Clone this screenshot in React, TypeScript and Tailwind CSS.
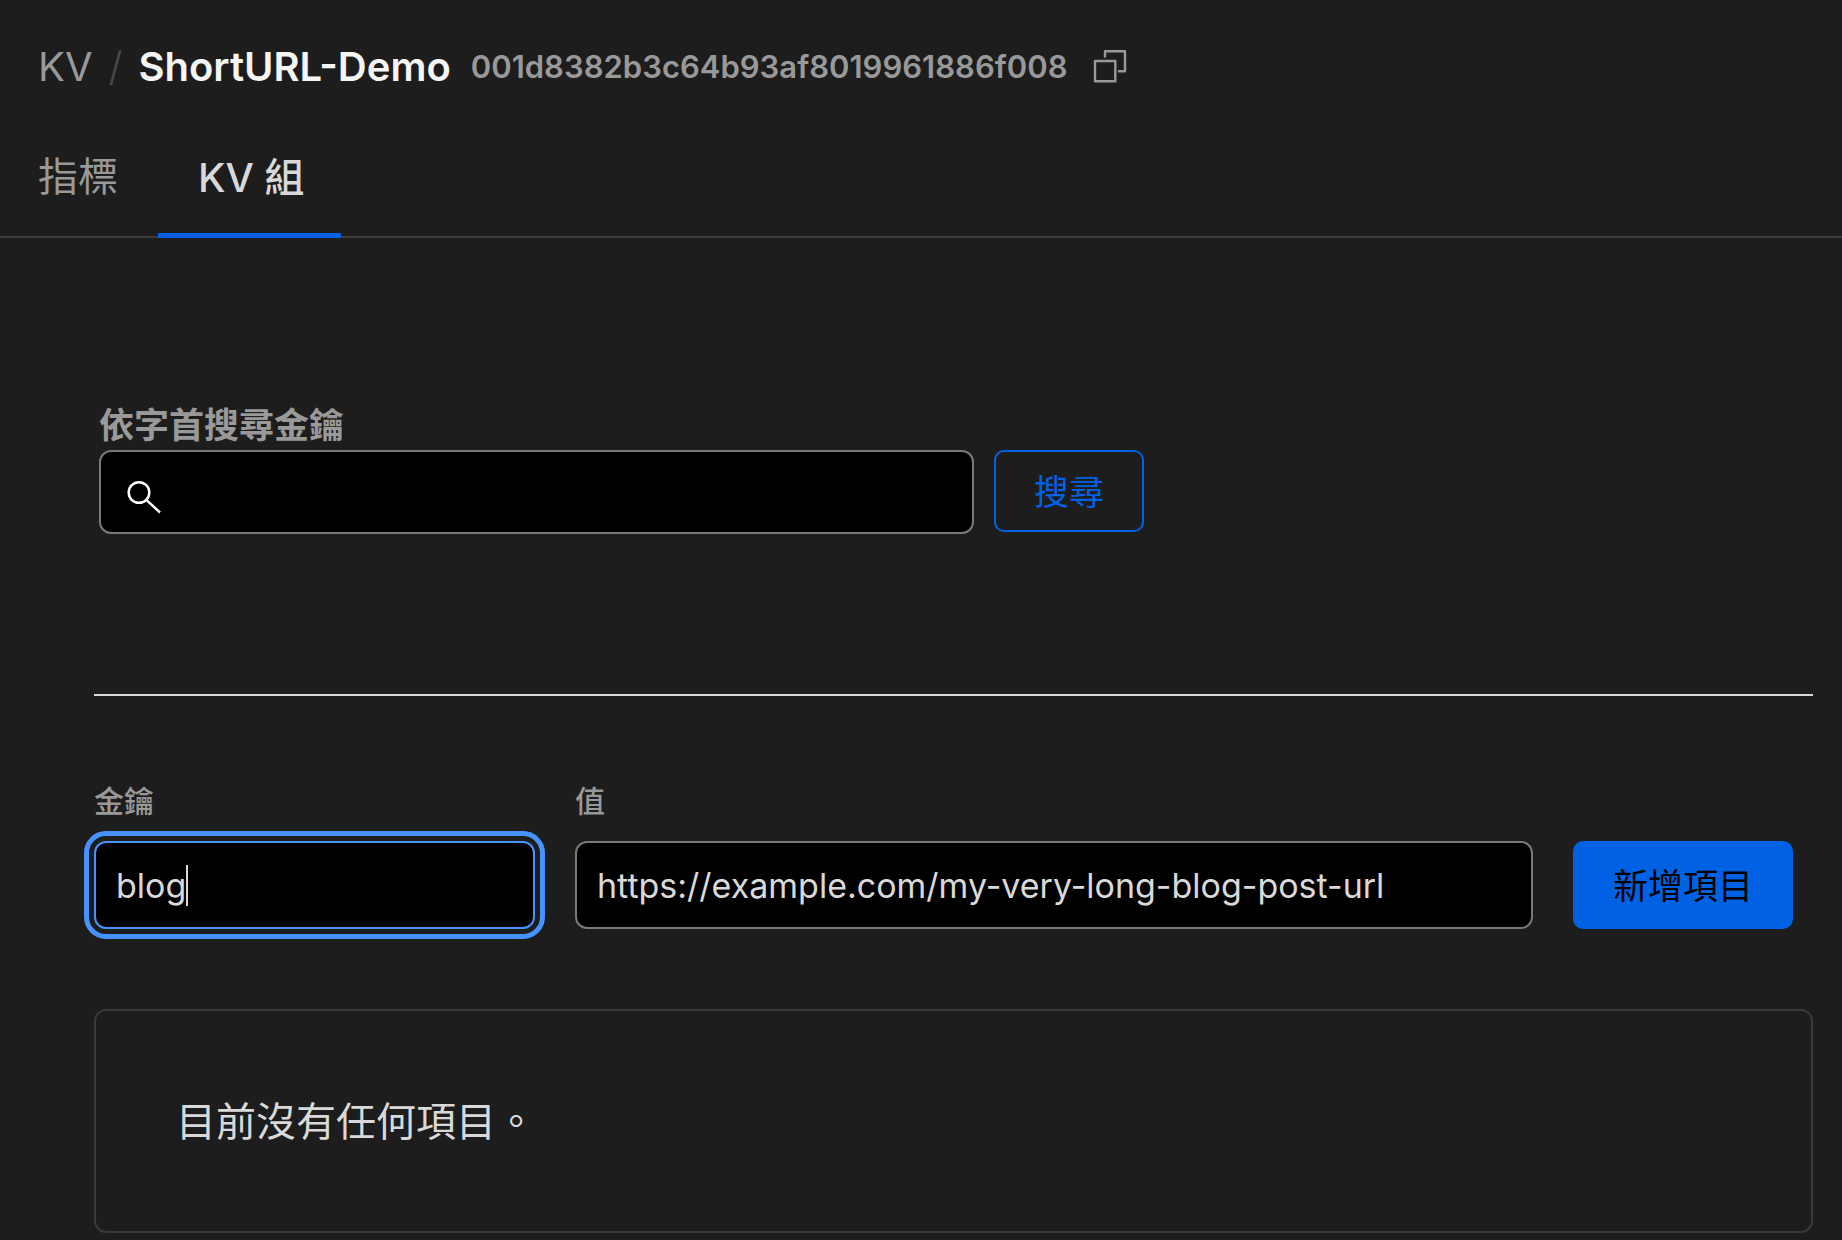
import { useState } from "react";

function CopyIcon() {
  return (
    <svg width="36" height="36" viewBox="0 0 36 36" fill="none" stroke="currentColor" strokeWidth="2.4" strokeLinejoin="round" strokeLinecap="round" aria-hidden="true">
      <rect x="3" y="12" width="20.300" height="20.300" />
      <path d="M13 7.500V2.200h20v20h-6" />
    </svg>
  );
}

function SearchIcon() {
  return (
    <svg width="36" height="36" viewBox="0 0 36 36" fill="none" stroke="currentColor" strokeWidth="2.5" aria-hidden="true">
      <circle cx="14" cy="14.500" r="10.300" />
      <path d="M21.300 21.800L35 34.500" />
    </svg>
  );
}

const field = "w-full rounded-xl border-2 bg-black px-5 outline-none";

export default function App() {
  const [prefix, setPrefix] = useState("");
  const [key, setKey] = useState("blog");
  const [value, setValue] = useState("https://example.com/my-very-long-blog-post-url");

  return (
    <div className="min-h-screen bg-[#1d1d1d] font-['Inter','Noto_Sans_CJK_TC',sans-serif] text-[#d9d9d9]">
      <header className="flex items-center px-[38px] pt-8 leading-[70px]">
        <a href="#kv" className="text-[40px] text-[#999999]">KV</a>
        <span className="ml-4 text-[40px] font-light text-[#4a4a4a]">/</span>
        <h1 className="ml-4 text-[40px] font-semibold text-[#f5f5f5]">ShortURL-Demo</h1>
        <span className="ml-5 text-[31px] font-semibold text-[#999999]">001d8382b3c64b93af8019961886f008</span>
        <button type="button" aria-label="複製" className="ml-6 text-[#999999]">
          <CopyIcon />
        </button>
      </header>

      <nav className="mt-4 flex border-b-2 border-[#3a3a3a] text-[40px]">
        <a href="#metrics" className="flex h-[118px] items-center pr-10 pl-[38px] text-[#999999]">指標</a>
        <a href="#pairs" aria-current="page" className="-mb-0.5 flex h-[120px] items-center border-b-5 border-[#0062e3] pt-1 pr-9 pl-10 font-medium">
          KV 組
        </a>
      </nav>

      <main className="pr-[29px] pl-[94px]">
        <form className="pt-[162px] pb-40 pl-[5px]" onSubmit={(e) => e.preventDefault()}>
          <label htmlFor="prefix" className="block text-[35px] leading-[50px] font-bold text-[#999999]">依字首搜尋金鑰</label>
          <div className="flex items-start gap-5">
            <div className="relative w-[875px]">
              <div className="absolute top-7 left-[26px] text-white">
                <SearchIcon />
              </div>
              <input id="prefix" type="text" value={prefix} onChange={(e) => setPrefix(e.target.value)} className={`${field} h-[84px] border-[#797979] pl-20 text-[35px]`} />
            </div>
            <button type="submit" className="h-[82px] rounded-[10px] border-2 border-[#0062e3] px-[38px] pt-0.5 text-[35px] text-[#0062e3]">搜尋</button>
          </div>
        </form>

        <hr className="border-t-2 border-[#d9d9d9]" />

        <form className="flex items-end gap-10 pt-20 pr-5" onSubmit={(e) => e.preventDefault()}>
          <div className="w-[441px]">
            <label htmlFor="key" className="mb-4 block pt-0.5 text-[30px] leading-[47px] font-medium text-[#999999]">金鑰</label>
            <div className="relative">
              <input id="key" type="text" value={key} onChange={(e) => setKey(e.target.value)} className={`${field} block h-[88px] border-[#4693ff] text-[34px] caret-transparent outline-5 outline-offset-5 outline-solid outline-[#4693ff]`} />
              <span aria-hidden="true" className="pointer-events-none absolute inset-y-0 left-[22px] flex items-center text-[34px]">
                <span className="invisible">{key}</span>
                <span className="h-[41px] w-0.5 bg-[#d9d9d9]" />
              </span>
            </div>
          </div>
          <div className="flex-1">
            <label htmlFor="value" className="mb-4 block pt-0.5 text-[30px] leading-[47px] font-medium text-[#999999]">值</label>
            <input id="value" type="text" value={value} onChange={(e) => setValue(e.target.value)} className={`${field} block h-[88px] border-[#797979] text-[34px]`} />
          </div>
          <button type="submit" className="h-[88px] rounded-[10px] bg-[#0062e3] px-10 pt-0.5 text-[35px] text-black">新增項目</button>
        </form>

        <section className="mt-20 rounded-xl border-2 border-[#3a3a3a] px-20 pt-[87px] pb-[85px]">
          <p className="text-[40px] leading-12">目前沒有任何項目。</p>
        </section>
      </main>
    </div>
  );
}
